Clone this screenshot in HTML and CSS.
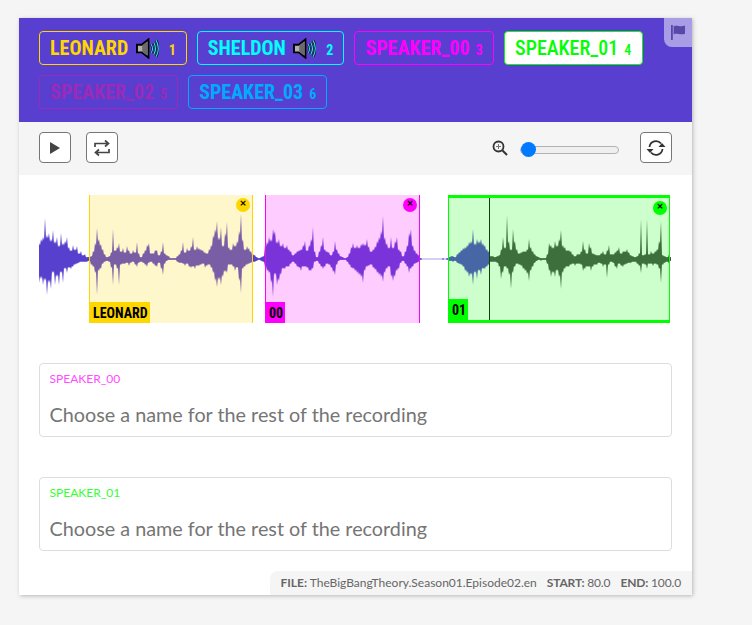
FILE: index.html
```html
<!DOCTYPE html>
<html>
    <head>
        <meta charset="utf-8">
        <meta name="viewport" content="width=device-width, initial-scale=1">
        <title>Speaker annotation</title>
        <link rel="stylesheet" href="styles.css">
    </head>
    <body>
        <div class="card">
            <div class="flag-tab">
                <svg width="14" height="15" viewBox="0 0 14 15"><path d="M0 0h1.800v15H0zM2.600 1.200c3.400-1.600 6 1 11.400-.6v8.200c-5.400 1.600-8-1-11.400.6z" fill="#5a48a8"/></svg>
            </div>
            <div class="tags">
                <div class="tag c-leonard"><span>LEONARD</span>
                    <svg class="spk" width="23" height="21" viewBox="0 0 24 21"><path d="M1 6.500h5L13 1v19l-7-5.500H1z" fill="#b0b0b0" stroke="#000" stroke-width="2"/><path d="M6.500 7v7l5.500 4V3z" fill="#6a6a6a"/><path d="M16 6c1.500 3 1.500 6 0 9M18.500 4c2.200 4 2.200 9 0 13M21 2c3 5 3 12 0 17" fill="none" stroke="#000" stroke-width="2.400"/><path d="M16 6c1.500 3 1.500 6 0 9M18.500 4c2.200 4 2.200 9 0 13M21 2c3 5 3 12 0 17" fill="none" stroke="#35e0f0" stroke-width="1.200"/></svg>
                    <span class="num">1</span></div>
                <div class="tag c-sheldon"><span>SHELDON</span>
                    <svg class="spk" width="23" height="21" viewBox="0 0 24 21"><path d="M1 6.500h5L13 1v19l-7-5.500H1z" fill="#b0b0b0" stroke="#000" stroke-width="2"/><path d="M6.500 7v7l5.500 4V3z" fill="#6a6a6a"/><path d="M16 6c1.500 3 1.500 6 0 9M18.500 4c2.200 4 2.200 9 0 13M21 2c3 5 3 12 0 17" fill="none" stroke="#000" stroke-width="2.400"/><path d="M16 6c1.500 3 1.500 6 0 9M18.500 4c2.200 4 2.200 9 0 13M21 2c3 5 3 12 0 17" fill="none" stroke="#35e0f0" stroke-width="1.200"/></svg>
                    <span class="num">2</span></div>
                <div class="tag c-s00"><span>SPEAKER_00</span><span class="num">3</span></div>
                <div class="tag c-s01 selected"><span>SPEAKER_01</span><span class="num">4</span></div>
                <div class="tag c-s02"><span>SPEAKER_02</span><span class="num">5</span></div>
                <div class="tag c-s03"><span>SPEAKER_03</span><span class="num">6</span></div>
            </div>
            <div class="toolbar">
                <div class="btn-group">
                    <button class="btn"><svg width="12" height="14" viewBox="0 0 12 14"><path d="M1 1l10 6-10 6z" fill="#444"/></svg></button>
                    <button class="btn"><svg width="18" height="18" viewBox="0 0 18 18"><path d="M2 8V4.500h12M12 1.500l3.500 3-3.500 3M16 10v3.500H4M6 10.500l-3.500 3 3.500 3" fill="none" stroke="#444" stroke-width="1.700"/></svg></button>
                </div>
                <div class="zoom">
                    <svg width="16" height="16" viewBox="0 0 16 16"><circle cx="6.500" cy="6.500" r="5" fill="none" stroke="#333" stroke-width="1.800"/><path d="M10.500 10.500l4.500 4.500" stroke="#333" stroke-width="2"/><path d="M6.500 4v5M4 6.500h5" stroke="#777" stroke-width="1"/></svg>
                    <input class="slider" type="range" min="0" max="100" value="0">
                    <button class="btn"><svg width="20" height="18" viewBox="0 0 20 18"><path d="M3.500 8a6.500 6.500 0 0 1 11.500-3.500M16.500 10A6.500 6.500 0 0 1 5 13.500" fill="none" stroke="#333" stroke-width="1.800"/><path d="M19.500 8h-7l3.500-4zM.5 10h7L4 14z" fill="#333"/></svg></button>
                </div>
            </div>
            <div class="wave">
                <svg class="wave-svg" width="633" height="128" viewBox="39 195 633 128">
                    <path id="played" fill="#5840cf"/>
                    <path id="rest" fill="#4b4b4b"/>
                </svg>
                <div class="cursor"></div>
                <div class="region r-leonard">
                    <span class="close"><span class="close-x">×</span></span>
                    <span class="region-label"><span class="label-text">LEONARD</span></span>
                </div>
                <div class="region r-s00">
                    <span class="close"><span class="close-x">×</span></span>
                    <span class="region-label"><span class="label-text">00</span></span>
                </div>
                <div class="region r-s01">
                    <span class="close"><span class="close-x">×</span></span>
                    <span class="region-label"><span class="label-text">01</span></span>
                </div>
            </div>
            <div class="field">
                <div class="field-name name-s00">SPEAKER_00</div>
                <input class="field-input" type="text" placeholder="Choose a name for the rest of the recording">
            </div>
            <div class="field">
                <div class="field-name name-s01">SPEAKER_01</div>
                <input class="field-input" type="text" placeholder="Choose a name for the rest of the recording">
            </div>
            <div class="info">
                <span><b>FILE:</b> TheBigBangTheory.Season01.Episode02.en</span>
                <span class="info-short"><b>START:</b> 80.0</span>
                <span class="info-short"><b>END:</b> 100.0</span>
            </div>
        </div>
        <script src="wave.js"></script>
    </body>
</html>
```

FILE: styles.css
```css
html{
    background-color: #f5f5f5;
}
body{
    margin: 0;
    padding: 18px 0 30px 19px;
    font-family: Lato, sans-serif;
}
.card{
    position: relative;
    width: 673px;
    height: 577px;
    background-color: #fff;
    box-shadow: 1px 1px 4px rgba(0, 0, 0, 0.25);
    display: flex;
    flex-direction: column;
}
.flag-tab{
    position: absolute;
    top: 0;
    right: 0;
    width: 28px;
    height: 29px;
    background-color: #a99ee6;
    border-bottom-left-radius: 8px;
    display: flex;
    align-items: center;
    justify-content: center;
}
.tags{
    background-color: #583fcf;
    height: 104px;
    box-sizing: border-box;
    padding: 13px 20px;
    display: flex;
    flex-wrap: wrap;
    align-content: flex-start;
    gap: 10px;
}
.tag{
    height: 34px;
    box-sizing: border-box;
    border: 1px solid;
    border-radius: 4px;
    padding: 0 10px;
    display: flex;
    align-items: center;
    font-family: "Roboto Condensed", Roboto, sans-serif;
    font-weight: 700;
    font-size: 20px;
}
.spk{
    margin: 0 4px 0 7.500px;
}
.num{
    font-size: 14px;
    margin-left: 6px;
    padding-top: 3px;
}
.c-leonard{
    color: #ffd700;
}
.c-sheldon{
    color: #00ffff;
}
.c-s00{
    color: #ff00ff;
}
.c-s01{
    color: #00ff00;
}
.c-s02{
    color: #9a2bb8;
}
.c-s03{
    color: #00aaff;
}
.selected{
    background-color: #fff;
    font-weight: 500;
    padding: 0 10.500px;
}
.toolbar{
    background-color: #f5f5f5;
    height: 53px;
    box-sizing: border-box;
    padding: 10px 20px;
    display: flex;
    justify-content: space-between;
}
.btn-group{
    display: flex;
    gap: 15px;
}
.btn{
    width: 32px;
    height: 31px;
    padding: 0;
    background-color: #fff;
    border: 1px solid #767676;
    border-radius: 4px;
    display: flex;
    align-items: center;
    justify-content: center;
}
.zoom{
    display: flex;
    align-items: center;
    height: 31px;
}
.slider{
    -webkit-appearance: none;
    appearance: none;
    width: 99px;
    height: 8px;
    margin: 4px 21px 0 12px;
    background-color: #efefef;
    border: 1px solid #b2b2b2;
    border-radius: 4px;
    box-sizing: border-box;
}
.slider::-webkit-slider-thumb{
    -webkit-appearance: none;
    width: 15px;
    height: 15px;
    border-radius: 50%;
    background-color: #007bff;
}
.wave{
    position: relative;
    width: 633px;
    height: 128px;
    margin: 20px 0 40px 20px;
}
.wave-svg{
    display: block;
}
.cursor{
    position: absolute;
    left: 450px;
    top: 0;
    width: 1px;
    height: 128px;
    background-color: #111;
}
.region{
    position: absolute;
    top: 0;
    height: 128px;
    box-sizing: border-box;
    border-left: 1px solid;
    border-right: 1px solid;
}
.r-leonard{
    left: 50px;
    width: 164px;
    color: #ffd700;
    background-color: rgba(255, 215, 0, 0.2);
}
.r-s00{
    left: 226px;
    width: 155px;
    color: #ff00ff;
    background-color: rgba(255, 0, 255, 0.2);
}
.r-s01{
    left: 409px;
    width: 222px;
    color: #00ff00;
    background-color: rgba(0, 255, 0, 0.2);
    border-top: 3px solid;
    border-bottom: 3px solid;
}
.close{
    position: absolute;
    top: 3px;
    right: 2px;
    width: 14px;
    height: 14px;
    border-radius: 50%;
    background-color: currentColor;
    text-align: center;
}
.close-x{
    display: block;
    color: #000;
    font: 700 9px/11px "DejaVu Sans", sans-serif;
}
.region-label{
    position: absolute;
    left: 0;
    bottom: 0;
    height: 21px;
    padding: 0 2px 0 3px;
    background-color: currentColor;
}
.label-text{
    color: #000;
    font: 700 14px/22px "Roboto Condensed", Roboto, sans-serif;
}
.field{
    width: 633px;
    height: 74px;
    box-sizing: border-box;
    margin: 0 0 40px 20px;
    padding: 8px 9.500px 0;
    border: 1px solid #ddd;
    border-radius: 4px;
}
.field-name{
    font: 400 12px/14px Lato, sans-serif;
}
.name-s00{
    color: #ff4dff;
}
.name-s01{
    color: #33ff33;
}
.field-input{
    display: block;
    width: 100%;
    margin-top: 14px;
    padding: 0;
    border: 0;
    outline: 0;
    font: 400 19.800px/28px Lato, sans-serif;
}
.field-input::placeholder{
    color: #757575;
}
.info{
    position: absolute;
    right: 0;
    bottom: 0;
    height: 24px;
    box-sizing: border-box;
    padding: 0 11px 0 10px;
    background-color: #f5f5f5;
    border-top-left-radius: 8px;
    color: #666;
    font-size: 12px;
    line-height: 24px;
    display: flex;
    gap: 10px;
}
.info-short{
    letter-spacing: -0.150px;
}
```

FILE: wave.js
```js
// amplitudes above and below the centre line, one value every 2px
var MID = 259

var playedTop = [16,20,22,41,24,26,20,29,18,22,14,26,16,18,22,12,9,14,10,13,6,8,4,5,2,
    2,3,8,16,31,20,15,10,5,2,3,7,30,9,12,16,8,11,7,13,9,6,9,7,17,6,2,6,9,14,16,6,6,9,9,4,8,17,6,4,3,1,1,1,3,5,9,17,7,11,9,13,22,10,13,11,10,9,7,6,10,14,24,30,38,22,32,14,26,37,12,10,16,14,18,28,45,20,10,13,11,8,5,
    4,2,1,2,3,
    14,17,22,20,30,28,18,20,14,16,12,14,10,8,4,6,8,9,10,14,18,9,14,20,32,8,2,8,14,22,10,8,7,4,8,18,10,6,3,2,1,2,6,12,16,12,14,12,15,16,15,20,13,8,10,13,18,22,28,43,22,16,12,22,12,18,22,10,8,3,8,14,26,30,14,9,6,4,
    1,.3,.3,.3,.3,.3,.3,.3,.3,.3,.3,1,.3,1,
    2,3,3,2,5,7,9,11,12,14,17,18,30,16,20,18,20,16,14,10,8]

var playedBottom = [24,20,26,22,36,24,30,14,26,18,26,14,24,10,14,9,10,8,6,5,4,3,3,3,3,
    2,6,8,14,36,12,10,5,3,2,3,9,26,6,10,26,6,5,5,4,7,4,3,6,8,4,3,4,6,8,4,3,5,7,8,4,10,16,5,2,1,1,1,1,3,4,4,5,7,5,8,9,8,10,7,7,6,5,9,7,6,9,14,22,28,21,26,18,13,14,6,6,8,12,9,22,34,10,8,6,5,4,3,
    3,2,1,2,3,
    8,12,14,24,38,16,26,22,16,10,10,8,8,5,3,5,8,9,12,8,8,9,12,12,10,3,2,5,8,10,8,5,6,9,13,16,6,2,1,1,1,3,6,9,10,12,14,16,18,24,12,8,7,6,9,11,14,16,18,23,14,10,8,18,22,18,12,10,4,2,5,8,14,10,8,5,4,3,
    1,.3,.3,.3,.3,.3,.3,.3,.3,.3,.3,1,.3,1,
    2,2,3,2,4,5,6,8,12,14,18,16,26,14,20,12,16,10,10,8,6]

var restTop = [8,3,3,2,3,4,10,22,12,44,18,10,30,18,10,6,7,8,8,10,20,12,8,5,3,2,1,1,1,5,16,14,12,18,14,20,29,14,12,9,9,8,5,3,5,5,8,18,10,6,16,12,6,5,4,4,6,8,5,9,14,5,5,7,9,12,6,8,8,10,7,4,3,2,3,6,40,4,5,40,5,8,6,8,10,18,38,4,3,2,5,2]

var restBottom = [6,3,3,3,4,8,20,14,8,10,16,30,14,8,5,6,7,10,12,15,22,12,8,4,2,1,2,1,1,5,12,18,14,18,12,18,30,14,10,8,8,6,5,7,5,5,6,12,10,8,8,12,8,6,6,4,5,8,6,19,6,3,4,8,10,5,7,8,6,5,4,4,3,3,5,7,14,5,6,10,5,5,7,5,6,10,24,6,4,3,5,2]

// between two samples the edge drops back, so that peaks stay thin
function notch(list, i){
    return Math.min(list[i], list[i + 1]) * 0.85
}

function shape(startX, top, bottom){
    var d = ''
    for(var i = 0; i < top.length; i++){
        d += (i == 0 ? 'M' : 'L') + (startX + i * 2) + ' ' + (MID - top[i])
        if(i < top.length - 1) d += 'L' + (startX + i * 2 + 1) + ' ' + (MID - notch(top, i))
    }
    for(var j = bottom.length - 1; j >= 0; j--){
        d += 'L' + (startX + j * 2) + ' ' + (MID + bottom[j])
        if(j > 0) d += 'L' + (startX + j * 2 - 1) + ' ' + (MID + notch(bottom, j - 1))
    }
    return d + 'z'
}

document.getElementById('played').setAttribute('d', shape(39, playedTop, playedBottom))
document.getElementById('rest').setAttribute('d', shape(489, restTop, restBottom))
```
